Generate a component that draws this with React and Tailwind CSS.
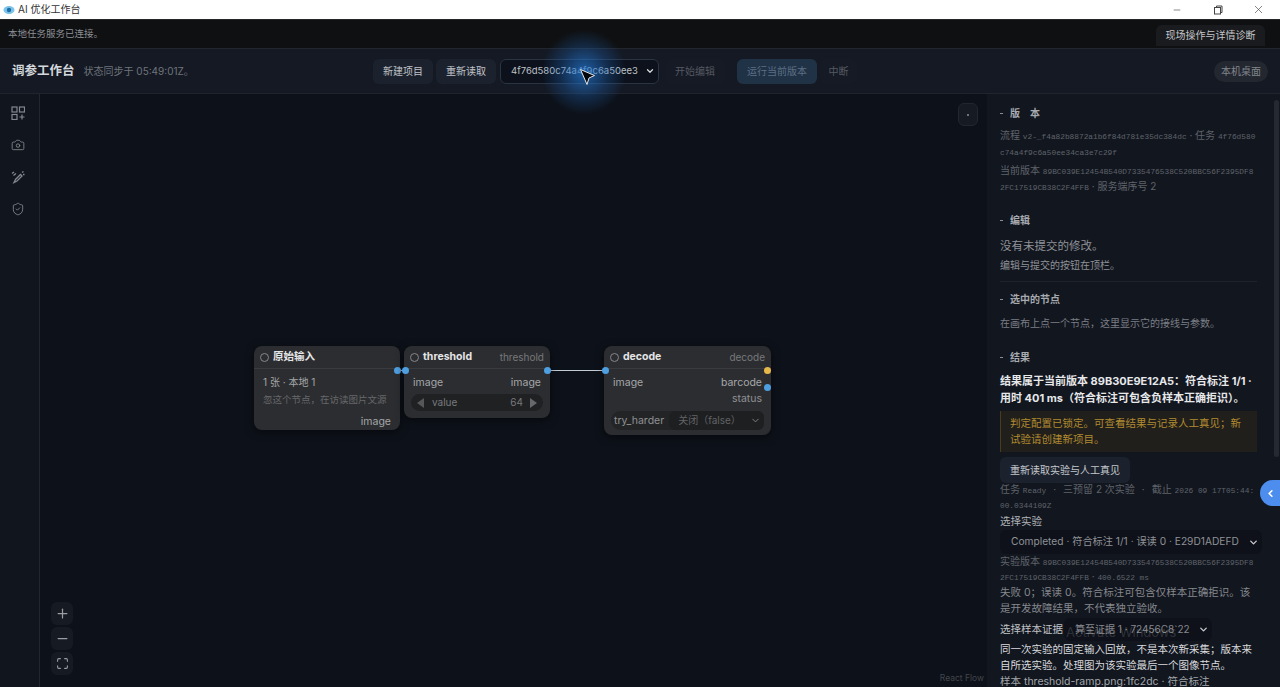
import { Camera, ChevronDown, ChevronLeft, Maximize, Minus, Plus, ShieldCheck, X } from 'lucide-react';

const font = "font-['Inter','Noto_Sans_CJK_SC',sans-serif]";
const meta = "text-[10px] leading-[15px] text-[#5f636a] break-all";
const hash = "font-['Liberation_Mono',monospace] text-[7.8px] leading-[1]";

function Handle({ className }) {
    return <span className={`absolute w-[7px] h-[7px] rounded-full ${className}`} />;
}

function Node({ title, kind, className, children }) {
    return (
        <div className={`absolute rounded-lg bg-[#2c2d30] shadow-[0_2px_8px_rgba(0,0,0,0.5)] ${className}`}>
            <div className="h-[23px] flex items-center px-[6px] border-b border-[#3a3b3e]">
                <span className="w-[9px] h-[9px] rounded-full border border-[#85878a] mr-[4px]" />
                <span className="text-[10.5px] font-bold text-[#e4e5e6]">{title}</span>
                {kind && <span className="ml-auto text-[10px] text-[#77797c]">{kind}</span>}
            </div>
            {children}
        </div>
    );
}

function Heading({ children, className = '' }) {
    return (
        <div className={`flex items-center h-[14px] text-[10px] font-semibold text-[#a6a9ae] ${className}`}>
            <span className="w-[3px] h-[1px] bg-[#8a8d92] mr-[7px]" />
            {children}
        </div>
    );
}

export default function App() {
    return (
        <div className={`relative w-[1280px] h-[687px] overflow-hidden flex flex-col bg-[#0d1119] ${font}`}>
            {/* Title bar */}
            <div className="h-[19px] shrink-0 bg-white flex items-center pl-[3px] text-[#333]">
                <svg width="12" height="10" viewBox="0 0 12 10" className="mr-[3px]">
                    <ellipse cx="6" cy="5" rx="5.5" ry="4" fill="#7cc3ea" />
                    <circle cx="6" cy="5" r="2.2" fill="#1b6fa8" />
                </svg>
                <span className="text-[10px]">AI 优化工作台</span>
                <Minus className="w-[10px] h-[10px] ml-auto mr-[31px] text-[#444]" strokeWidth={1.5} />
                <svg width="10" height="10" viewBox="0 0 10 10" fill="none" stroke="#444" className="mr-[29px]">
                    <rect x="1.5" y="2.5" width="6" height="6.5" />
                    <path d="M3.5 2.5V1H9v6.5H7.5" />
                </svg>
                <X className="w-[13px] h-[13px] mr-[15px] text-[#444]" strokeWidth={1.2} />
            </div>

            {/* Notice bar */}
            <div className="h-[30px] shrink-0 bg-[#0f1012] border-b border-[#23262c] border-t border-t-[#26272a] flex items-center justify-between pl-[8px] pr-[15px]">
                <span className="text-[9.5px] text-[#8c8f94]">本地任务服务已连接。</span>
                <button className="mt-[2px] w-[109px] h-[21px] rounded-t-md bg-[#1a1b1e] text-[10px] text-[#c4c6c9]">现场操作与详情诊断</button>
            </div>

            {/* Header */}
            <div className="h-[45px] shrink-0 bg-[#141924] border-b border-[#20242d] relative flex items-center pl-[12px] pr-[12px]">
                <span className="text-[12.5px] font-bold text-[#d5d8dc]">调参工作台</span>
                <span className="ml-[9px] text-[10px] text-[#70747b]">状态同步于 05:49:01Z。</span>
                <div className="absolute left-[373px] top-[9px] flex items-center h-[26px]">
                    <button className="w-[60px] h-[25px] rounded-md bg-[#1b222e] text-[10px] text-[#c0c3c8]">新建项目</button>
                    <button className="ml-[3px] w-[60px] h-[25px] rounded-md bg-[#1b222e] text-[10px] text-[#c0c3c8]">重新读取</button>
                    <div className="ml-[4px] w-[159px] h-[25px] rounded-md bg-[#0c111b] border border-[#2b3442] flex items-center pl-[10px] pr-[3px] text-[9.5px] text-[#bfc3c9]">
                        <span className="whitespace-nowrap">4f76d580c74a4f9c6a50ee3</span>
                        <ChevronDown className="ml-auto shrink-0 w-[10px] h-[10px] text-[#d8dadd]" strokeWidth={3} />
                    </div>
                    <button className="ml-[6px] w-[60px] h-[25px] rounded-md bg-[#151a24] text-[10px] text-[#555962]">开始编辑</button>
                    <button className="ml-[12px] w-[80px] h-[25px] rounded-md bg-[#203246] text-[10px] text-[#5c6f84]">运行当前版本</button>
                    <button className="ml-[3px] w-[37px] h-[25px] rounded-md bg-[#151a24] text-[10px] text-[#555962]">中断</button>
                </div>
                <button className="ml-auto w-[54px] h-[21px] rounded-full bg-[#222730] text-[10px] text-[#82868c]">本机桌面</button>
            </div>

            <div className="flex-1 min-h-0 flex">
                {/* Left rail */}
                <div className="w-[40px] shrink-0 bg-[#11151e] border-r border-[#22262e] flex flex-col items-center pt-[12px] gap-[18px] pr-[3px]">
                    <svg width="14" height="14" viewBox="0 0 14 14" fill="none" stroke="#84888e" strokeWidth="1.2">
                        <rect x="1" y="1" width="5" height="5" />
                        <rect x="8.5" y="1" width="5" height="5" />
                        <rect x="1" y="8.5" width="5" height="5" />
                        <path d="M11 8.5v5M8.5 11h5" />
                    </svg>
                    <Camera className="w-[14px] h-[14px] text-[#84888e]" strokeWidth={1.5} />
                    <svg width="14" height="14" viewBox="0 0 14 14" fill="none" stroke="#84888e" strokeWidth="1.3">
                        <path d="M3 12.5L4.5 9.5L9.5 4.5L11 6L6 11Z" />
                        <path d="M11 2.5L12.5 1.5M12 4.5H13.5" />
                        <path d="M1 3.5L3 2M2.5 5.5L5 3.5" />
                    </svg>
                    <ShieldCheck className="w-[14px] h-[14px] text-[#84888e]" strokeWidth={1.5} />
                </div>

                {/* Canvas */}
                <div className="relative flex-1 min-w-0 bg-[#0d1119]">
                    <svg className="absolute inset-0 w-full h-full" fill="none">
                        <path d="M360 276.5H364M510 276.5H564" stroke="#c3cbd4" strokeWidth="1" />
                    </svg>

                    <Node title="原始输入" className="left-[214px] top-[252px] w-[146px] h-[84px]">
                        <div className="px-[9px] pt-[6px] text-[10px] leading-[15px] text-[#a5a7aa]">1 张 · 本地 1</div>
                        <div className="px-[9px] pt-[3px] text-[9.5px] leading-[14px] text-[#66686b] whitespace-nowrap">忽这个节点，在访读图片文源</div>
                        <div className="pr-[9px] pt-[8px] text-right text-[10.5px] leading-[14px] text-[#a5a7aa]">image</div>
                    </Node>
                    <Handle className="left-[354px] top-[273px] bg-[#4e9fe0]" />

                    <Node title="threshold" kind="threshold" className="left-[364px] top-[252px] w-[146px] h-[72px]">
                        <div className="flex justify-between px-[9px] pt-[7px] text-[10.5px] leading-[14px] text-[#a5a7aa]">
                            <span>image</span>
                            <span>image</span>
                        </div>
                        <div className="mx-[7px] mt-[4px] h-[17px] rounded-full bg-[#202123] flex items-center px-[6px] text-[10px] text-[#77797c]">
                            <span className="w-0 h-0 border-y-[5px] border-y-transparent border-r-[7px] border-r-[#55575a]" />
                            <span className="ml-[8px]">value</span>
                            <span className="ml-auto mr-[7px]">64</span>
                            <span className="w-0 h-0 border-y-[5px] border-y-transparent border-l-[7px] border-l-[#66686b]" />
                        </div>
                    </Node>
                    <Handle className="left-[362px] top-[273px] bg-[#4e9fe0]" />
                    <Handle className="left-[504px] top-[273px] bg-[#4e9fe0]" />

                    <Node title="decode" kind="decode" className="left-[564px] top-[252px] w-[167px] h-[89px]">
                        <div className="flex justify-between pl-[9px] pr-[9px] pt-[6px] text-[10.5px] leading-[16px] text-[#a5a7aa]">
                            <span>image</span>
                            <span>barcode</span>
                        </div>
                        <div className="pr-[9px] text-right text-[10.5px] leading-[16px] text-[#8f9194]">status</div>
                        <div className="mx-[7px] mt-[4px] h-[19px] rounded-full bg-[#232426] flex items-center text-[10.5px] text-[#8f9194]">
                            <span className="pl-[3px]">try_harder</span>
                            <div className="ml-[5px] flex-1 h-full rounded-md bg-[#1e1f21] flex items-center pl-[9px] pr-[3px] text-[10px] text-[#616366]">
                                关闭（false）
                                <ChevronDown className="ml-auto w-[11px] h-[11px] text-[#88898c]" strokeWidth={2} />
                            </div>
                        </div>
                    </Node>
                    <Handle className="left-[562px] top-[273px] bg-[#4e9fe0]" />
                    <Handle className="left-[724px] top-[273px] bg-[#e6b84a]" />
                    <Handle className="left-[724px] top-[290px] bg-[#4e9fe0]" />

                    {/* Panel toggle */}
                    <button className="absolute right-[9px] top-[9px] w-[20px] h-[23px] rounded-md bg-[#161a23] border border-[#22262e] flex items-center justify-center">
                        <span className="w-[2px] h-[2px] rounded-full bg-[#8a8d92]" />
                    </button>

                    {/* Zoom controls */}
                    <div className="absolute left-[11px] bottom-[12px] flex flex-col gap-[2px]">
                        <button className="w-[22px] h-[23px] rounded-md bg-[#151a23] flex items-center justify-center text-[#9a9da2]"><Plus className="w-[15px] h-[15px]" strokeWidth={2} /></button>
                        <button className="w-[22px] h-[23px] rounded-md bg-[#151a23] flex items-center justify-center text-[#9a9da2]"><Minus className="w-[15px] h-[15px]" strokeWidth={2} /></button>
                        <button className="w-[22px] h-[23px] rounded-md bg-[#151a23] flex items-center justify-center text-[#9a9da2]"><Maximize className="w-[13px] h-[13px]" strokeWidth={2} /></button>
                    </div>

                    <span className="absolute right-[3px] bottom-[2px] text-[8.5px] text-[#43464c]">React Flow</span>
                </div>

                {/* Right panel */}
                <div className="relative w-[293px] shrink-0 overflow-hidden bg-[#12161f] pt-[12px] pl-[13px] pr-[23px]">
                    <Heading className="tracking-[10px]">版本</Heading>
                    <div className={`mt-[7px] ${meta} leading-[16px]`}>
                        流程 <span className={hash}>v2-_f4a82b8872a1b6f84d781e35dc384dc</span> · 任务 <span className={hash}>4f76d580c74a4f9c6a50ee34ca3e7c29f</span>
                    </div>
                    <div className={`mt-[3px] ${meta} leading-[16px]`}>
                        当前版本 <span className={hash}>89BC039E12454B540D7335476538C520BBC56F2395DF82FC17519CB38C2F4FFB</span> · 服务端序号 2
                    </div>

                    <div className="mt-[19px]"><Heading>编辑</Heading></div>
                    <div className="mt-[10px] text-[11.5px] leading-[18px] text-[#8f9297]">没有未提交的修改。</div>
                    <div className="mt-[2px] text-[10px] leading-[16px] text-[#8f9297]">编辑与提交的按钮在顶栏。</div>
                    <div className="mt-[8px] border-t border-[#1f232c]" />

                    <div className="mt-[10px]"><Heading>选中的节点</Heading></div>
                    <div className="mt-[9px] text-[10px] leading-[16px] text-[#7b7f85]">在画布上点一个节点，这里显示它的接线与参数。</div>

                    <div className="mt-[19px]"><Heading>结果</Heading></div>
                    <div className="mt-[9px] text-[11px] leading-[17px] font-bold text-[#e6e8ea] w-[262px]">
                        结果属于当前版本 89B30E9E12A5：符合标注 1/1 · 用时 401 ms（符合标注可包含负样本正确拒识）。
                    </div>
                    <div className="mt-[4px] w-[257px] h-[41px] bg-[#211f1c] border-l border-[#4a3c1e] px-[9px] pt-[5px] text-[10.5px] leading-[16px] text-[#b08a30]">
                        判定配置已锁定。可查看结果与记录人工真见；新试验请创建新项目。
                    </div>
                    <button className="block mt-[5px] w-[130px] h-[26px] rounded-md bg-[#1b222e] text-[10px] text-[#c4c7cb]">重新读取实验与人工真见</button>
                    <div className={`-mt-[1px] ${meta}`}>
                        任务 <span className={hash}>Ready</span><span className="mx-[7px]">·</span>三预留 2 次实验<span className="mx-[7px]">·</span>截止 <span className={hash}>2026 09 17T05:44:00.0344109Z</span>
                    </div>
                    <div className="mt-[2px] text-[10.5px] leading-[16px] text-[#b0b3b7]">选择实验</div>
                    <div className="w-[262px] h-[24px] rounded-md bg-[#0e1119] flex items-center pl-[11px] pr-[3px] text-[10.2px] text-[#8f9297]">
                        Completed · 符合标注 1/1 · 误读 0 · E29D1ADEFD
                        <ChevronDown className="ml-auto w-[11px] h-[11px] text-[#c8cacd]" strokeWidth={3} />
                    </div>
                    <div className={meta}>
                        实验版本 <span className={hash}>89BC039E12454B540D7335476538C520BBC56F2395DF82FC17519CB38C2F4FFB</span> · <span className={hash}>400.6522 ms</span>
                    </div>
                    <div className="mt-[1px] text-[10.5px] leading-[16px] text-[#85888d] w-[260px]">
                        失败 0；误读 0。符合标注可包含仅样本正确拒识。该是开发故障结果，不代表独立验收。
                    </div>
                    <div className="flex items-center mt-[1px]">
                        <span className="text-[10.5px] text-[#c0c3c7]">选择样本证据</span>
                        <div className="ml-[1px] w-[148px] h-[23px] rounded-md bg-[#0e1119] flex items-center pl-[11px] pr-[3px] text-[10px] text-[#85888d]">
                            算至证据 1 · 72456C8`22
                            <ChevronDown className="ml-auto w-[11px] h-[11px] text-[#c8cacd]" strokeWidth={3} />
                        </div>
                    </div>
                    <div className="mt-[1px] text-[10.5px] leading-[16px] text-[#d8dadd] w-[262px]">
                        同一次实验的固定输入回放，不是本次新采集；版本来自所选实验。处理图为该实验最后一个图像节点。
                    </div>
                    <div className="text-[10.5px] leading-[16px] text-[#a3a6aa] whitespace-nowrap">样本 threshold-ramp.png:1fc2dc · 符合标注</div>

                    {/* Scrollbar */}
                    <div className="absolute right-[1px] top-[6px] w-[5px] h-[357px] rounded-full bg-[#252932]" />
                </div>
            </div>

            {/* Floating tab */}
            <div className="absolute left-[1260px] top-[480px] w-[20px] h-[26px] rounded-l-full bg-[#4c8dee] flex items-center justify-center">
                <ChevronLeft className="w-[11px] h-[11px] text-white" strokeWidth={3.5} />
            </div>

            {/* Watermark */}
            <div className="absolute left-[1066px] top-[624px] text-[13px] leading-[16px] text-white/15 pointer-events-none">Activate Windows</div>

            {/* Cursor highlight */}
            <div className="absolute left-[541px] top-[29px] w-[86px] h-[86px] rounded-full bg-[radial-gradient(circle,rgba(35,120,210,0.75)_0%,rgba(30,100,180,0.32)_40%,rgba(20,60,120,0)_70%)] pointer-events-none" />
            <svg className="absolute left-[579px] top-[68px]" width="18" height="18" viewBox="0 0 18 18">
                <path d="M1.5 1.5L15.5 7.5L10 10L8 16.5Z" fill="#05070a" stroke="#e4e8ec" strokeWidth="1" />
            </svg>
        </div>
    );
}
